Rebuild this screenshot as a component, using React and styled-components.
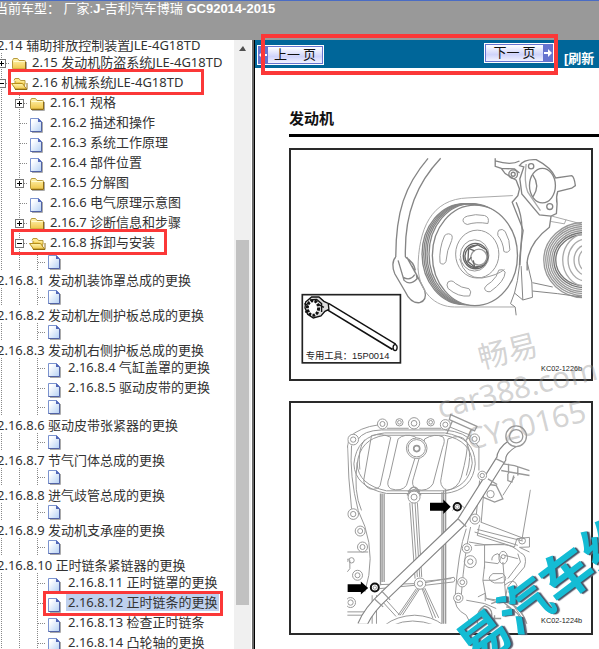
import React from "react";
import styled, { createGlobalStyle, css } from "styled-components";

const GlobalStyle = createGlobalStyle`
  * { box-sizing: border-box; }
  body {
    margin: 0;
    background: #fff;
    overflow: hidden;
    font-family: "Noto Sans", "Noto Sans CJK SC", sans-serif;
  }
`;

const Page = styled.div`
  position: relative;
  display: flex;
  flex-direction: column;
  height: 100vh;
  overflow: hidden;
`;

const Header = styled.header`
  flex: none;
  height: 40px;
  border-top: 1px solid #4a6cc4;
  background: #999;
  color: #fff;
  font-family: "Liberation Sans", "Noto Sans CJK SC", sans-serif;
  font-size: 13px;
  line-height: 16px;
  white-space: pre;
`;

const Model = styled.div`
  margin-left: -5px;
`;

const Frames = styled.div`
  flex: 1;
  display: flex;
  min-height: 0;
`;

const Sidebar = styled.nav`
  flex: none;
  display: flex;
  width: 255px;
  overflow: hidden;
  border-right: 1px solid #000;
`;

const Tree = styled.ul`
  flex: 1;
  min-width: 0;
  margin: -4px 0 0 -8px;
  padding: 0;
  list-style: none;
  color: #333;
  font-size: 13px;
  white-space: nowrap;
  overflow: hidden;
`;

const Row = styled.li`
  display: flex;
  height: 20px;
`;

const IconLine = styled.li`
  display: flex;
  height: 18px;
`;

const WrappedText = styled.li`
  height: 17px;
  padding-left: 5px;
  line-height: 19px;
`;

const Guide = styled.span`
  flex: none;
  position: relative;
  width: 18px;
  background: repeating-linear-gradient(to bottom, #888 0 1px, transparent 1px 2px) 9px 0 / 1px 100% no-repeat;
  ${(props) => props.$joint && css`
    &::after {
      content: "";
      position: absolute;
      top: 50%;
      left: 10px;
      right: 0;
      height: 1px;
      background: repeating-linear-gradient(to right, #888 0 1px, transparent 1px 2px);
    }
  `}
`;

const Toggle = styled.button`
  position: absolute;
  z-index: 1;
  left: 5px;
  top: 6px;
  width: 9px;
  height: 9px;
  padding: 0;
  border: 1px solid #777;
  background:
    linear-gradient(#000, #000) center / 5px 1px no-repeat,
    ${(props) => (props.$open ? "" : "linear-gradient(#000, #000) center / 1px 5px no-repeat,")}
    #fff;
`;

const Label = styled.a`
  height: 18px;
  margin-left: 2px;
  padding: 0 2px;
  color: inherit;
  line-height: 19px;
  text-decoration: none;
  background: ${(props) => (props.$selected ? "#bed0ee" : "transparent")};
`;

const NodeIcon = styled.svg`
  flex: none;
  width: 18px;
  height: 18px;
  margin-top: ${(props) => (props.$compact ? "-1px" : "2px")};
`;

const ScrollTrack = styled.div`
  flex: none;
  display: flex;
  flex-direction: column;
  align-items: center;
  width: 17px;
  margin-right: 1px;
  background: #f0f0f0;
`;

const ScrollArrow = styled.button`
  width: 17px;
  height: 17px;
  padding: 0;
  border: 0;
  background: #505050;
  clip-path: polygon(5px 11px, 9px 6px, 12px 11px);
`;

const ScrollThumb = styled.div`
  width: 13px;
  margin-top: 183px;
  height: 60%;
  background: #c1c1c1;
`;

const FrameEdge = styled.div`
  flex: none;
  width: 2px;
  background: #696969;
`;

const Content = styled.main`
  flex: 1;
  position: relative;
  min-width: 0;
  overflow: hidden;
  background: #fff;
`;

const Toolbar = styled.div`
  display: flex;
  height: 28px;
  padding: 3px 0 0 2px;
  background: #069;
`;

const PageButton = styled.button`
  flex: none;
  display: flex;
  align-items: stretch;
  justify-content: space-between;
  width: ${(props) => (props.$next ? "70px" : "67px")};
  height: 20px;
  margin-top: ${(props) => (props.$next ? "0" : "2px")};
  margin-right: ${(props) => (props.$next ? "10px" : "160px")};
  padding: 0;
  border: 1px solid #fff;
  background: #6674cf;
  color: #111;
  font: 400 13px/14px "Noto Sans CJK SC", sans-serif;
`;

const ButtonFace = styled.span`
  flex: 1;
  margin: ${(props) => (props.$next ? "1px 0 1px 1px" : "1px 1px 1px 0")};
  background: linear-gradient(#fff, #cfd3fb 60%, #f1f2ff);
  white-space: pre;
`;

const ArrowIcon = styled.svg`
  flex: none;
  width: 10px;
  height: 18px;
`;

const Refresh = styled.a`
  color: #fff;
  font: 700 13px/18px "Liberation Sans", "Noto Sans CJK SC", sans-serif;
  margin-top: 7px;
  white-space: nowrap;
  text-decoration: none;
`;

const Article = styled.article`
  padding: 38px 6px 0 34px;
`;

const Title = styled.h1`
  margin: 0 -6px 11px 0;
  padding-bottom: 4px;
  border-bottom: 3px solid #000;
  color: #111;
  font: 700 15px/24px "Noto Sans CJK SC", sans-serif;
`;

const Figure = styled.figure`
  margin: 0 0 20px;
  border: 2px solid #2a2a2a;
`;

const Drawing = styled.svg`
  display: block;
  width: 100%;
  height: auto;
  fill: none;
  stroke: #858585;
  stroke-width: 3;
  text {
    stroke: none;
    fill: #222;
    font-family: "Liberation Sans", "Noto Sans CJK SC", sans-serif;
  }
`;

const Watermark = styled.div`
  position: absolute;
  left: 162px;
  top: 291px;
  width: 200px;
  color: rgba(150, 150, 150, 0.42);
  font-size: 30px;
  line-height: 38px;
  text-align: center;
  transform: rotate(-14deg);
  pointer-events: none;
`;

const Stamp = styled.div`
  position: absolute;
  left: 185px;
  top: 518px;
  color: #14bcd4;
  font: 700 52px/60px "Noto Sans CJK SC", sans-serif;
  white-space: nowrap;
  text-shadow: 1px 1px 0 #456, 2px 2px 1px #667;
  transform: rotate(-37deg);
  pointer-events: none;
`;

const Mark = styled.div`
  position: absolute;
  left: ${(props) => props.$x}px;
  top: ${(props) => props.$y}px;
  width: ${(props) => props.$w}px;
  height: ${(props) => props.$h}px;
  border: ${(props) => props.$b || 3}px solid #fb3838;
  pointer-events: none;
`;

const nodes = [
  { level: 1, kind: "folder", text: "2.15 发动机防盗系统JLE-4G18TD" },
  { level: 1, kind: "open", text: "2.16 机械系统JLE-4G18TD" },
  { level: 2, kind: "folder", text: "2.16.1 规格" },
  { level: 2, kind: "file", text: "2.16.2 描述和操作" },
  { level: 2, kind: "file", text: "2.16.3 系统工作原理" },
  { level: 2, kind: "file", text: "2.16.4 部件位置" },
  { level: 2, kind: "folder", text: "2.16.5 分解图" },
  { level: 2, kind: "file", text: "2.16.6 电气原理示意图" },
  { level: 2, kind: "folder", text: "2.16.7 诊断信息和步骤" },
  { level: 2, kind: "open", text: "2.16.8 拆卸与安装" },
  { level: 3, kind: "file", wrap: true, text: "2.16.8.1 发动机装饰罩总成的更换" },
  { level: 3, kind: "file", wrap: true, text: "2.16.8.2 发动机左侧护板总成的更换" },
  { level: 3, kind: "file", wrap: true, text: "2.16.8.3 发动机右侧护板总成的更换" },
  { level: 3, kind: "file", text: "2.16.8.4 气缸盖罩的更换" },
  { level: 3, kind: "file", text: "2.16.8.5 驱动皮带的更换" },
  { level: 3, kind: "file", wrap: true, text: "2.16.8.6 驱动皮带张紧器的更换" },
  { level: 3, kind: "file", wrap: true, text: "2.16.8.7 节气门体总成的更换" },
  { level: 3, kind: "file", wrap: true, text: "2.16.8.8 进气歧管总成的更换" },
  { level: 3, kind: "file", wrap: true, text: "2.16.8.9 发动机支承座的更换" },
  { level: 3, kind: "file", wrap: true, text: "2.16.8.10 正时链条紧链器的更换" },
  { level: 3, kind: "file", text: "2.16.8.11 正时链罩的更换" },
  { level: 3, kind: "file", selected: true, text: "2.16.8.12 正时链条的更换" },
  { level: 3, kind: "file", text: "2.16.8.13 检查正时链条" },
  { level: 3, kind: "file", text: "2.16.8.14 凸轮轴的更换" },
];

function TreeIcon({ kind, compact }) {
  return (
    <NodeIcon viewBox="0 0 18 18" $compact={compact} aria-hidden="true">
      {kind === "file" && (
        <>
          <path d="M4 17.5h10.5V7" fill="none" stroke="#aaa" />
          <path d="M2.5 3.5h8l3 3v10h-11z" fill="url(#paper)" stroke="#7b93cf" />
          <path d="M13.5 7v9.5h-11" fill="none" stroke="#5263a5" />
          <path d="M10 3l4 4h-4z" fill="#5367b8" />
        </>
      )}
      {kind === "folder" && (
        <>
          <path d="M4 15.5h12.5V7" fill="none" stroke="#aaa" />
          <path d="M2.5 5.5l1-2h4l1.500 2h5.500q1 0 1 1v7.500h-12q-1 0-1-1z" fill="url(#folder)" stroke="#b79a3c" />
          <path d="M3.500 6.500h11" stroke="#fffbd0" />
          <path d="M3 14.500h12.500V7" fill="none" stroke="#8e6b14" />
        </>
      )}
      {kind === "open" && (
        <>
          <path d="M4 5.500l1-2h4l1.500 2h4.500v3" fill="#ffe88a" stroke="#b79a3c" />
          <path d="M5 6v8h9l1-6" fill="#f2cf52" stroke="#b79a3c" />
          <path d="M1.500 8.500h11l4 5.500h-11z" fill="url(#folder)" stroke="#b58d1e" />
          <path d="M5 14.500h12V8" fill="none" stroke="#8e6b14" />
        </>
      )}
    </NodeIcon>
  );
}

function TreeNode({ node }) {
  const hasToggle = node.kind !== "file";
  const guides = [];
  for (let i = 0; i < node.level; i++) {
    const last = i === node.level - 1;
    guides.push(
      <Guide key={i} $joint={last}>
        {last && hasToggle && (
          <Toggle $open={node.kind === "open"} aria-label={node.kind === "open" ? "收起" : "展开"} />
        )}
      </Guide>
    );
  }
  if (node.wrap) {
    return (
      <>
        <IconLine>{guides}<TreeIcon kind={node.kind} compact /></IconLine>
        <WrappedText>{node.text}</WrappedText>
      </>
    );
  }
  return (
    <Row>
      {guides}
      <TreeIcon kind={node.kind} />
      <Label href="#" $selected={node.selected}>{node.text}</Label>
    </Row>
  );
}

function PulleyDrawing() {
  return (
    <Drawing viewBox="18 13 902 690">
      <clipPath id="rightEdge"><rect x="700" y="200" width="193" height="270" /></clipPath>
      <g strokeWidth="4">
        <path d="M430 38C360 120 333 200 333 335M468 38C400 110 358 200 362 335" />
        <path d="M333 335C322 345 322 368 330 385L362 440Q378 475 405 472Q428 465 420 435L382 362M340 345L358 405Q376 422 397 400L395 388L366 335M362 335Q388 350 392 375M356 396Q376 408 390 388" />
      </g>
      <path d="M400 372C400 250 440 160 550 157L685 150M400 370C405 440 450 485 510 485H690" stroke="#aaa" />
      <g strokeWidth="4">
        {[540, 545, 550, 555, 561].map((cx) => (
          <ellipse key={cx} cx={cx} cy="326" rx="128" ry="152" />
        ))}
        <ellipse cx="571" cy="330" rx="128" ry="151" fill="#fff" />
      </g>
      <g stroke="#999">
        <path d="M548 212Q572 204 600 210Q616 215 610 234Q575 228 548 237Q532 232 536 220Q540 214 548 212Z" />
        <path d="M480 270Q492 260 502 270Q504 276 501 285Q486 315 484 348Q477 362 466 352Q462 310 480 270Z" />
        <path d="M643 254Q654 248 662 258Q677 284 676 313Q670 325 658 318Q656 290 640 270Q638 260 643 254Z" />
        <path d="M490 410Q503 402 512 414Q530 428 553 430Q563 438 555 452Q520 456 490 429Q484 418 490 410Z" />
        <path d="M643 374Q655 369 662 380Q661 408 617 439Q602 441 600 428Q603 420 621 409Q637 395 643 374Z" />
        <ellipse cx="578" cy="326" rx="65" ry="72" />
        <path d="M525 340Q540 400 592 398Q638 390 660 372" />
        <ellipse cx="570" cy="330" rx="43" ry="47" />
      </g>
      <g stroke="#666" strokeWidth="4">
        <ellipse cx="573" cy="332" rx="37" ry="38" />
        <ellipse cx="572" cy="333" rx="31" ry="33" />
        <path d="M552 309L579 298L605 313L610 336L597 360L570 365L550 348Z" fill="#fff" />
        <circle cx="583" cy="335" r="24" stroke="#999" />
        <path d="M552 309L570 316M570 365L566 345M550 348L560 335" />
      </g>
      <g strokeWidth="4">
        <path d="M632 38V62L650 68L662 84L695 104L705 130L700 150L683 170L710 238L716 255Q706 320 705 360M632 46Q680 60 705 46M650 68L690 70L705 82" />
        <path d="M705 60Q718 40 755 42Q800 65 814 97L862 90Q870 94 873 120L862 128L820 138Q814 155 818 175L816 204L800 212L765 208L712 145L706 100L718 64Z" fill="#fff" />
        <path d="M725 55Q718 110 730 140L768 195" stroke="#aaa" />
        <ellipse cx="774" cy="120" rx="39" ry="52" />
        <path d="M745 88Q768 120 746 153" />
        <circle cx="740" cy="62" r="8" /><circle cx="796" cy="183" r="9" />
        <circle cx="686" cy="86" r="13" /><circle cx="686" cy="86" r="6" />
        <path d="M800 212L795 245Q735 290 728 350V375M695 170Q718 220 711 280L706 360" />
      </g>
      <path d="M803 212L890 235M800 228L840 235L845 222" stroke="#aaa" />
      <g clipPath="url(#rightEdge)" strokeWidth="4">
        {[122, 116, 110, 104, 98, 92, 86].map((r) => (
          <ellipse key={r} cx="900" cy="344" rx={r} ry={r - 9} stroke={r < 98 ? "#777" : "#999"} />
        ))}
        {[70, 54, 36, 22].map((r) => <ellipse key={r} cx="905" cy="344" rx={r} ry={r + 9} stroke="#aaa" />)}
      </g>
      <path d="M705 360Q700 410 690 443L715 464L744 456L742 410L728 350M715 464L710 362M744 412L805 425M744 437L820 445L893 455M690 443L678 475L692 485L695 510" />
      <rect x="52" y="448" width="295" height="205" stroke="#222" strokeWidth="5" />
      <g stroke="#111" strokeWidth="4">
        <path d="M126 482L328 605" strokeWidth="23" />
        <path d="M125 481L327 604" stroke="#fff" strokeWidth="14" />
        <ellipse cx="331" cy="607" rx="6" ry="9" fill="#fff" />
        <path d="M62 470L80 455H102L117 468L130 474L132 492L120 498L108 512L85 518L68 507L60 488Z" fill="#ddd" />
        <ellipse cx="84" cy="488" rx="17" ry="22" fill="#fff" strokeWidth="9" strokeDasharray="8 4" />
        <path d="M75 464L95 462L110 475V500M58 475L70 480M60 500L74 498M102 478L117 486" />
      </g>
      <text x="62" y="642" fontSize="28">专用工具：15P0014</text>
      <text x="770" y="677" fontSize="22">KC02-1226b</text>
    </Drawing>
  );
}

const bolts = [
  [205, 132, 16], [293, 85, 15], [344, 80, 11], [388, 83, 17], [438, 80, 11], [482, 87, 15],
  [570, 130, 15], [593, 240, 13], [205, 356, 16], [226, 407, 15], [233, 455, 15],
  [218, 540, 15], [388, 305, 18], [571, 371, 15], [547, 459, 14], [533, 561, 14], [521, 608, 14],
];

function CoverDrawing() {
  return (
    <Drawing viewBox="18 22 902 690">
      <clipPath id="cover"><rect x="187" y="40" width="552" height="646" /></clipPath>
      <g clipPath="url(#cover)" stroke="#999">
        <path d="M187 157L193 125Q225 95 280 88M306 98H372M404 98H470M495 94L555 118L583 155V225M585 255L575 360M188 150Q190 250 200 340M219 132Q235 105 290 103H480Q545 110 562 140M200 150Q193 240 220 345Q268 440 252 540L240 590M217 200Q205 290 230 345" />
        <path d="M300 112H480Q570 125 572 205Q565 285 480 294H305Q210 275 207 205Q215 120 300 112ZM300 119H480Q560 135 563 203Q553 275 480 286H305Q220 268 217 205Q225 130 300 119Z" />
        <path d="M260 120Q290 112 318 125L286 270Q278 285 255 280Q235 270 237 252ZM340 130Q360 112 390 123Q408 135 400 158L365 270Q350 290 318 280Q302 270 314 245ZM420 130Q450 112 475 124Q483 135 474 155L445 265Q430 290 395 282Q377 270 387 245ZM490 130Q530 112 548 140Q550 170 530 245Q520 280 485 285Q462 270 470 245Z" />
        <path d="M240 132Q217 160 225 222M548 145Q564 180 545 240" />
        <path d="M498 57L577 92L570 106L494 72ZM503 77L486 115M560 102L545 135" strokeWidth="4" />
        <circle cx="396" cy="158" r="31" fill="#fff" /><circle cx="396" cy="158" r="26" /><circle cx="396" cy="159" r="9" strokeWidth="5" />
        <path d="M370 290Q388 260 405 290M367 300Q388 265 409 300" strokeWidth="4" />
        <path d="M287 294V570M292 294V560M298 294V560M472 290V690M477 285V690M483 280V690" strokeWidth="4" />
        <path d="M375 322L391 550M382 322L398 545M391 322L405 545M398 322L411 545" />
        <path d="M187 470H250M187 500Q185 485 195 495V520L187 530M187 650H240M187 660H238M262 600V690M275 600V690" />
        <path d="M300 690Q335 662 390 660Q440 662 477 690M325 690Q380 665 450 690" />
        <path d="M285 568L392 565M285 580L392 570M422 562L508 546Q515 554 507 560L422 570M420 558L500 550M395 580L340 660M404 582L353 660M399 582L346 660M412 580L445 670M420 578L462 668M416 580L453 668M300 610L345 660M292 618L334 664" />
        <circle cx="406" cy="565" r="17" fill="#fff" /><circle cx="406" cy="565" r="8" />
        <path d="M600 260L590 380M738 283L712 435M588 380L720 430M570 410L700 450M585 388L578 420L690 455M578 402L715 437M553 440L600 448V520M570 450L660 446M545 400Q520 470 512 600Q505 640 545 660M558 395Q540 470 530 600L525 620" />
        <path d="M690 455L697 430L735 426V455L705 456L735 470" /><circle cx="713" cy="436" r="10" />
        <path d="M600 448H660Q685 450 708 472Q730 480 720 515L675 568Q665 575 663 620M655 500L665 620M600 500L640 505Q655 490 640 475Q620 480 622 495M600 510L595 555H632L655 545M595 555L605 610L640 620M660 480L700 490M700 475L708 500L670 550M625 535H655Q672 550 655 563H630Q600 552 625 535Z" />
        <ellipse cx="656" cy="487" rx="13" ry="19" /><circle cx="656" cy="484" r="6" /><path d="M545 615L600 625L635 640M580 605L602 594V618M660 570Q690 545 698 572Q690 595 670 590M545 660L560 690M605 610L680 620L720 680" />
        <circle cx="557" cy="499" r="18" /><circle cx="557" cy="499" r="8" /><circle cx="597" cy="652" r="12" />
        <path d="M580 690Q570 650 600 632Q628 640 620 670M620 625L650 615L680 640M660 620Q710 630 728 690M665 635Q705 645 715 690M575 670H650M606 660V690M618 660V690M630 660V690" strokeWidth="4" />
        <path d="M635 202L690 210L735 225M650 225L735 240M672 205V235M700 212V240M670 235L670 255L682 260L688 240M600 265L635 270L655 310L630 320L595 305Z" strokeWidth="4" />
        <circle cx="618" cy="296" r="11" /><path d="M690 245L655 300M503 345L525 325L560 355" />
        <path d="M690 140Q650 165 650 190L530 380L300 600Q250 645 232 690" stroke="#858585" strokeWidth="31" />
        <path d="M690 140Q650 165 650 190L530 380L300 600Q250 645 232 690" stroke="#fff" strokeWidth="24" />
        <path d="M635 190L662 203M610 250L638 267M520 370L545 394M290 587L316 614M270 612L295 635" strokeWidth="4" />
        <circle cx="695" cy="122" r="31" fill="#fff" strokeWidth="4" /><circle cx="695" cy="122" r="20" fill="#fff" strokeWidth="4" />
        {bolts.map(([cx, cy, r]) => (
          <g key={`${cx}-${cy}`}>
            <circle cx={cx} cy={cy} r={r} fill="#fff" />
            <circle cx={cx} cy={cy} r={r / 2} />
          </g>
        ))}
        <circle cx="200" cy="495" r="8" /><circle cx="197" cy="622" r="15" /><circle cx="197" cy="622" r="8" />
        <path d="M188 567H228V559L250 578L228 598V590H188ZM436 322H476V312L498 334L476 356V346H436Z" fill="#000" stroke="none" />
        <g stroke="#111" strokeWidth="6">
          <circle cx="518" cy="334" r="11" fill="#fff" /><circle cx="270" cy="577" r="12" fill="#fff" />
        </g>
        <circle cx="518" cy="334" r="5" /><circle cx="270" cy="577" r="5" />
      </g>
      <text x="770" y="685" fontSize="22">KC02-1224b</text>
    </Drawing>
  );
}

function App() {
  return (
    <Page>
      <GlobalStyle />
      <svg width="0" height="0" style={{ position: "absolute" }} aria-hidden="true">
        <linearGradient id="paper" x1="0" y1="0" x2="1" y2="1">
          <stop offset="0.2" stopColor="#fff" />
          <stop offset="1" stopColor="#b4d0f4" />
        </linearGradient>
        <linearGradient id="folder" x1="0" y1="0" x2="0" y2="1">
          <stop offset="0" stopColor="#fff6b4" />
          <stop offset="1" stopColor="#f0c648" />
        </linearGradient>
      </svg>

      <Header>
        <Model>当前车型： 厂家:<b>J-</b>吉利汽车博瑞 <b>GC92014-2015</b></Model>
      </Header>

      <Frames>
        <Sidebar>
          <Tree>
            <WrappedText>2.14 辅助排放控制装置JLE-4G18TD</WrappedText>
            {nodes.map((node) => <TreeNode key={node.text} node={node} />)}
          </Tree>
          <ScrollTrack>
            <ScrollArrow aria-label="向上滚动" />
            <ScrollThumb />
          </ScrollTrack>
          <FrameEdge />
        </Sidebar>

        <Content>
          <Toolbar>
            <PageButton>
              <ArrowIcon viewBox="0 0 10 18"><path d="M1 9l4-4v3h4v2H5v3z" fill="#fff" /></ArrowIcon>
              <ButtonFace>上一 页</ButtonFace>
            </PageButton>
            <PageButton $next>
              <ButtonFace $next>下一 页</ButtonFace>
              <ArrowIcon viewBox="0 0 10 18"><path d="M9 9L5 5v3H1v2h4v3z" fill="#fff" /></ArrowIcon>
            </PageButton>
            <Refresh href="#">[刷新</Refresh>
          </Toolbar>
          <Article>
            <Title>发动机</Title>
            <Figure><PulleyDrawing /></Figure>
            <Figure><CoverDrawing /></Figure>
          </Article>
          <Watermark>畅易<br />car388.com<br />CY20165</Watermark>
          <Stamp>易汽车维</Stamp>
        </Content>
      </Frames>

      <Mark $x={261} $y={34} $w={297} $h={41} $b={4} />
      <Mark $x={8} $y={69} $w={196} $h={26} />
      <Mark $x={11} $y={229} $w={156} $h={26} />
      <Mark $x={43} $y={591} $w={180} $h={25} />
    </Page>
  );
}

export default App;
